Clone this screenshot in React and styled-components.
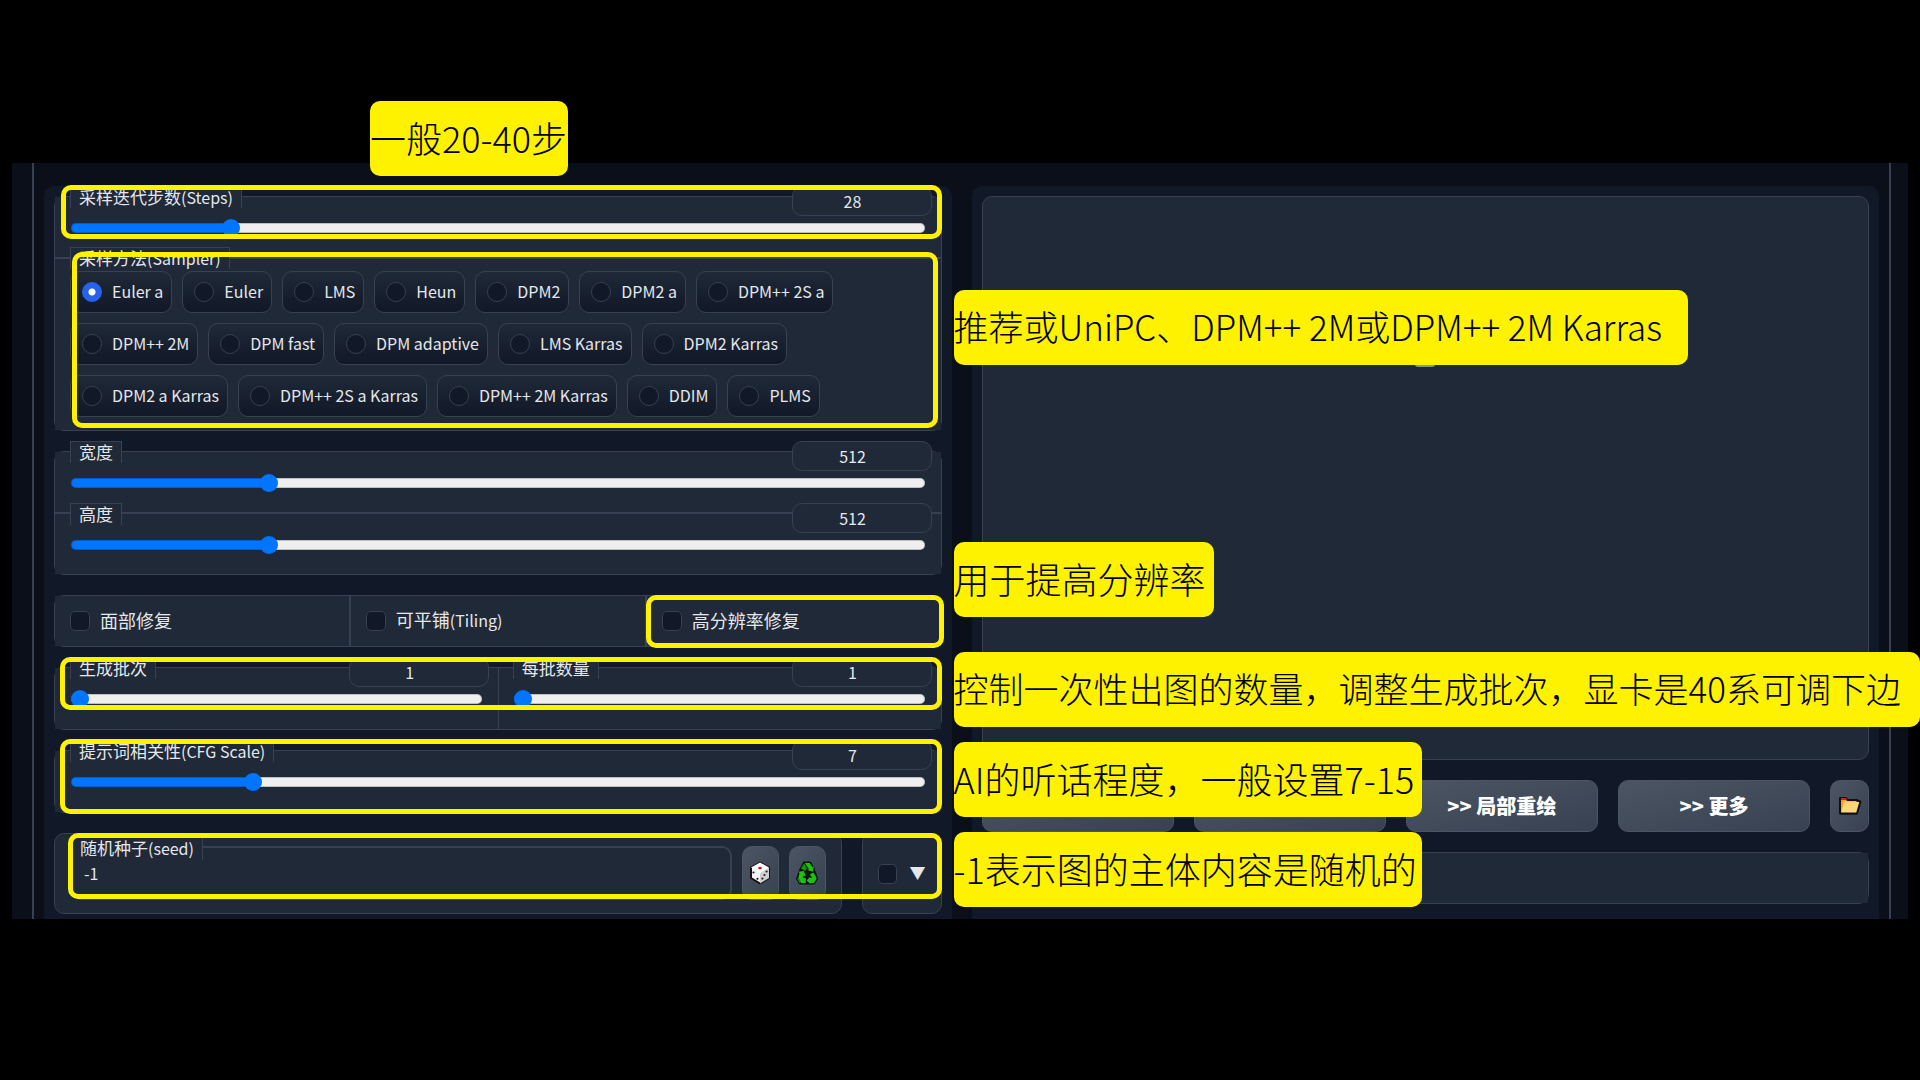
import React, { useState } from 'react'
import styled, { createGlobalStyle } from 'styled-components'

const samplers = [
    'Euler a', 'Euler', 'LMS', 'Heun', 'DPM2', 'DPM2 a', 'DPM++ 2S a',
    'DPM++ 2M', 'DPM fast', 'DPM adaptive', 'LMS Karras', 'DPM2 Karras',
    'DPM2 a Karras', 'DPM++ 2S a Karras', 'DPM++ 2M Karras', 'DDIM', 'PLMS',
]

function Slider({ id, label, latin, min, max, initial }) {
    const [value, setValue] = useState(initial)
    const ratio = (value - min) / (max - min)
    const onChange = (e) => setValue(Number(e.target.value))

    return (
        <Row>
            <RowHeader>
                <Label htmlFor={id}>{label}{latin && <Latin>{latin}</Latin>}</Label>
                <NumberBox aria-label={label} type="number" min={min} max={max} value={value} onChange={onChange} />
            </RowHeader>
            <Range
                id={id}
                type="range"
                min={min}
                max={max}
                value={value}
                onChange={onChange}
                style={{ '--ratio': ratio }}
            />
        </Row>
    )
}

function Check({ id, label, latin }) {
    return (
        <CheckCell htmlFor={id}>
            <Checkbox id={id} type="checkbox" />
            <CheckText>{label}{latin && <Latin>{latin}</Latin>}</CheckText>
        </CheckCell>
    )
}

function DiceIcon() {
    return (
        <svg width="22" height="24" viewBox="0 0 22 24" aria-hidden="true">
            <path d="M11 1.5 L20 6.5 V17 L11 22.5 L2 17 V6.5 Z" fill="#f2f2f2" stroke="#111" strokeWidth="2" strokeLinejoin="round" />
            <path d="M11 12 L20 6.5 V17 L11 22.5 Z" fill="#cfcfcf" />
            <path d="M11 1.5 L20 6.5 L11 12 L2 6.5 Z" fill="#fff" />
            <ellipse cx="11" cy="7" rx="1.8" ry="1.2" fill="#d5121e" />
            <g fill="#222">
                <circle cx="4.5" cy="11.5" r="1.1" />
                <circle cx="8.5" cy="17.8" r="1.1" />
                <circle cx="17.6" cy="10.5" r="1.1" />
                <circle cx="15.5" cy="14" r="1.1" />
                <circle cx="13.4" cy="17.6" r="1.1" />
            </g>
        </svg>
    )
}

function RecycleIcon() {
    return (
        <svg width="22" height="24" viewBox="0 0 22 24" aria-hidden="true">
            <path d="M7.5 1 H14.5 L18 7 L21.5 17.5 L18.5 23 H3.5 L0.5 18 L4 8 Z" fill="#111" stroke="#111" strokeLinejoin="round" />
            <g fill="#16c60c">
                <path d="M8.8 2 H13.8 L16.2 6 L17.8 5.4 L16.6 10.8 L11.4 9 L13 8.2 Z" />
                <path d="M17.5 11.4 L20.8 17.5 L18 22 H14.4 V23 L10.6 19.4 L14.4 15.6 V17 H16 L14 13.2 Z" />
                <path d="M2.4 10.8 L7.8 10 L9.8 15.2 L7.8 14.6 L6.6 17 H9.8 V22 H5 L2.4 16.2 L3.6 12.2 Z" />
            </g>
            <g fill="#0d9a07">
                <path d="M8 2.4 L11 7 L9.2 10 L5 7.6 Z" />
                <path d="M2.2 16 L4.6 22 H3.6 L1.4 18 Z" />
            </g>
        </svg>
    )
}

function FolderIcon() {
    return (
        <svg width="24" height="20" viewBox="0 0 24 20" aria-hidden="true">
            <path d="M2 2 H8 L9.5 4 H19 V17.5 H2 Z" fill="#f9a11b" stroke="#111" strokeWidth="2" strokeLinejoin="round" />
            <path d="M3 2 H8 L9 4 H3 Z" fill="#e81224" />
            <path d="M6 5.5 H22.5 L19 17.5 H3 Z" fill="#ffd67a" />
            <path d="M19 4.5 L22.5 5.5 L19 17.5 H2" fill="none" stroke="#111" strokeWidth="2" strokeLinejoin="round" />
        </svg>
    )
}

function App() {
    const [sampler, setSampler] = useState('Euler a')
    const [seed, setSeed] = useState('-1')

    return (
        <Screen>
            <GlobalStyle />
            <Panel>
                <Frame>
                    <Column>
                        <Group>
                            <Slider id="steps" label="采样迭代步数" latin="(Steps)" min={1} max={150} initial={28} />
                            <SamplerRow>
                                <Label as="legend">采样方法<Latin>(Sampler)</Latin></Label>
                                <Pills>
                                    {samplers.map((name) => (
                                        <Pill key={name}>
                                            <Radio
                                                type="radio"
                                                name="sampler"
                                                checked={sampler === name}
                                                onChange={() => setSampler(name)}
                                            />
                                            <PillText>{name}</PillText>
                                        </Pill>
                                    ))}
                                </Pills>
                            </SamplerRow>
                            <Highlight $top={-12} $height={54} $left={6} />
                            <Highlight $top={55} $height={176} $left={17} $right={3} />
                            <Note $top={-96} $left="315px" $width={198}>一般20-40步</Note>
                            <Note $top={93} $width={734} $long>推荐或UniPC、DPM++ 2M或DPM++ 2M Karras</Note>
                        </Group>

                        <Group>
                            <Slider id="width" label="宽度" min={64} max={2048} initial={512} />
                            <Slider id="height" label="高度" min={64} max={2048} initial={512} />
                        </Group>

                        <Group>
                            <CheckRow>
                                <Check id="faces" label="面部修复" />
                                <Check id="tiling" label="可平铺" latin="(Tiling)" />
                                <CheckHolder>
                                    <Check id="hires" label="高分辨率修复" />
                                    <Highlight $top={-1} $height={53} $left={-1} $right={-3} />
                                </CheckHolder>
                            </CheckRow>
                            <Note $top={-54} $width={260}>用于提高分辨率</Note>
                        </Group>

                        <Group>
                            <Pair>
                                <Slider id="count" label="生成批次" min={1} max={100} initial={1} />
                                <Slider id="size" label="每批数量" min={1} max={8} initial={1} />
                            </Pair>
                            <Highlight $top={-11} $height={53} $left={5} />
                            <Note $top={-16} $width={966} $long>控制一次性出图的数量，调整生成批次，显卡是40系可调下边</Note>
                        </Group>

                        <Group>
                            <Slider id="cfg" label="提示词相关性" latin="(CFG Scale)" min={1} max={30} initial={7} />
                            <Highlight $top={-12} $height={75} $left={5} />
                            <Note $top={-9} $width={468}>AI的听话程度，一般设置7-15</Note>
                        </Group>

                        <SeedRow>
                            <SeedBox>
                                <SeedField>
                                    <SeedLabel htmlFor="seed">随机种子<Latin>(seed)</Latin></SeedLabel>
                                    <SeedInput id="seed" type="text" value={seed} onChange={(e) => setSeed(e.target.value)} />
                                </SeedField>
                                <ToolButton aria-label="随机"><DiceIcon /></ToolButton>
                                <ToolButton aria-label="重用"><RecycleIcon /></ToolButton>
                            </SeedBox>
                            <ExtraBox htmlFor="extra">
                                <Checkbox id="extra" type="checkbox" />
                                <CheckText>▼</CheckText>
                            </ExtraBox>
                            <Highlight $top={0} $height={66} $left={14} $right={0} />
                            <Note $top={-1} $left="calc(100% + 12px)" $width={468}>-1表示图的主体内容是随机的</Note>
                        </SeedRow>
                    </Column>

                    <Column>
                        <Gallery>
                            <GalleryIcon width="26" height="24" viewBox="0 0 26 24" fill="none" stroke="#8b929c" strokeWidth="2" aria-hidden="true">
                                <rect x="4" y="3" width="18" height="19" rx="2" />
                                <circle cx="10" cy="9" r="2" />
                                <path d="M22 14 L17 9 L8 20" />
                            </GalleryIcon>
                        </Gallery>
                        <Actions>
                            <ActionButton aria-label="保存" />
                            <ActionButton aria-label="打包" />
                            <ActionButton>&gt;&gt; 局部重绘</ActionButton>
                            <ActionButton>&gt;&gt; 更多</ActionButton>
                            <FolderButton aria-label="打开文件夹"><FolderIcon /></FolderButton>
                        </Actions>
                        <Group>
                            <InfoRow />
                        </Group>
                    </Column>
                </Frame>
            </Panel>
        </Screen>
    )
}

export default App


const GlobalStyle = createGlobalStyle`
    body {
        margin: 0;
        background: #000;
        overflow-x: hidden;
    }
    *, *::before, *::after {
        box-sizing: border-box;
    }
    body, input, button {
        font-family: "Noto Sans CJK SC", sans-serif;
    }
`

const Screen = styled.main`
    padding: 163px 12px;
    color: #e5e7eb;
`

const Panel = styled.div`
    padding: 0 17px 0 20px;
    background: #0b0f19;
`

const Frame = styled.div`
    display: grid;
    grid-template-columns: minmax(0, 1fr) minmax(0, 1fr);
    gap: 20px;
    padding: 23px 10px 0;
    border: solid #374151;
    border-width: 0 2px;
`

const Column = styled.section`
    display: flex;
    flex-direction: column;
    gap: 20px;
    padding: 10px 10px 5px;
    border-radius: 10px 10px 0 0;
    background: #111827;
`

const Group = styled.div`
    position: relative;
    border: 1px solid #374151;
    border-radius: 10px;
`

const Row = styled.div`
    display: flex;
    flex-direction: column;
    padding-bottom: 20px;
    background: #1f2937;

    & + & {
        padding: 1px 0 19px;
        box-shadow: 0 -1px #374151, inset 0 1px #374151;
    }
`

const RowHeader = styled.div`
    display: flex;
    justify-content: space-between;
    align-items: flex-start;
    margin-top: -11px;
    padding: 0 9px 0 15px;
`

const Label = styled.label`
    height: 22px;
    padding: 0 8px;
    border: 1px solid #374151;
    border-bottom: 0;
    background: #1f2937;
    font-size: 17px;
    line-height: 19px;
    white-space: nowrap;
`

const Latin = styled.span`
    font-size: 16px;
`

const NumberBox = styled.input`
    width: 140px;
    height: 30px;
    padding: 0 18px 1px 0;
    border: 1px solid #374151;
    border-radius: 10px;
    background: #1f2937;
    color: #e5e7eb;
    font-size: 16px;
    text-align: center;
    appearance: textfield;

    &::-webkit-inner-spin-button {
        display: none;
    }
`

const Range = styled.input`
    width: calc(100% - 32px);
    height: 20px;
    margin: 2px 16px 0;
    appearance: none;
    background: none;

    &::-webkit-slider-runnable-track {
        height: 10px;
        border-radius: 5px;
        background: linear-gradient(#0075ff, #0075ff) 0 / calc(9px + (100% - 18px) * var(--ratio)) 100% no-repeat, #efefef;
        box-shadow: inset 0 0 0 1px rgba(0, 0, 0, 0.2);
    }

    &::-webkit-slider-thumb {
        width: 18px;
        height: 18px;
        margin-top: -4px;
        border-radius: 50%;
        background: #0075ff;
        appearance: none;
    }
`

const SamplerRow = styled.fieldset`
    min-width: 0;
    margin: 0;
    padding: 0 15px 13px;
    border: 0;
    background: #1f2937;
    box-shadow: 0 -1px #374151, inset 0 1px #374151;

    & > legend {
        float: left;
        margin-top: -11px;
    }
`

const Pills = styled.div`
    clear: both;
    display: flex;
    flex-wrap: wrap;
    gap: 10px;
    padding-top: 2px;
`

const Pill = styled.label`
    display: flex;
    align-items: center;
    gap: 10px;
    height: 42px;
    padding: 0 8px 0 11px;
    border: 1px solid #374151;
    border-radius: 10px;
    background: linear-gradient(to bottom, #1f2937, #111827);
    font-size: 16px;
    white-space: nowrap;
`

const PillText = styled.span`
    padding-bottom: 2px;
`

const Radio = styled.input`
    width: 20px;
    height: 20px;
    margin: 0;
    border: 1px solid #374151;
    border-radius: 50%;
    background: #111827;
    appearance: none;

    &:checked {
        border-color: #2563eb;
        background: radial-gradient(circle, #fff 3px, #2563eb 4px);
    }
`

const Checkbox = styled.input`
    width: 20px;
    height: 20px;
    margin: 0;
    border: 1px solid #374151;
    border-radius: 5px;
    background: #111827;
    appearance: none;
`

const CheckRow = styled.div`
    display: grid;
    grid-template-columns: repeat(3, 1fr);
    gap: 2px;
    background: #374151;
`

const CheckHolder = styled.div`
    position: relative;
`

const CheckCell = styled.label`
    display: flex;
    align-items: center;
    gap: 10px;
    height: 50px;
    padding: 0 15px;
    background: #1f2937;
`

const CheckText = styled.span`
    padding-bottom: 3px;
    font-size: 18px;
    line-height: 24px;
`

const Pair = styled.div`
    display: grid;
    grid-template-columns: 1fr 1fr;

    & > ${Row} + ${Row} {
        padding: 0 0 20px;
        box-shadow: inset 1px 0 #374151;
    }
`

const SeedRow = styled.div`
    position: relative;
    display: flex;
    gap: 20px;
`

const SeedBox = styled.div`
    flex: 1;
    display: flex;
    gap: 10px;
    padding: 12px 15px 13px;
    border: 1px solid #374151;
    border-radius: 10px;
    background: #1f2937;
`

const SeedField = styled.div`
    flex: 1;
    border: 2px solid #374151;
    border-radius: 10px;
`

const SeedLabel = styled(Label)`
    display: block;
    width: fit-content;
    margin-top: -10px;
    border-width: 0 1px 0 0;
`

const SeedInput = styled.input`
    display: block;
    width: 100%;
    height: 26px;
    padding: 0 12px;
    border: 0;
    background: none;
    color: #e5e7eb;
    font-size: 16px;
`

const Button = styled.button`
    display: flex;
    align-items: center;
    justify-content: center;
    padding: 0;
    border: 1px solid #4b5563;
    border-radius: 10px;
    background: linear-gradient(to bottom right, #4b5563, #374151);
    color: #fff;
`

const ToolButton = styled(Button)`
    width: 37px;
    height: 54px;
`

const ExtraBox = styled.label`
    display: flex;
    align-items: center;
    gap: 12px;
    width: 80px;
    padding: 0 15px;
    border: 1px solid #374151;
    border-radius: 10px;
    background: #1f2937;

    & > ${CheckText} {
        font-size: 16px;
    }
`

const Gallery = styled.div`
    height: 564px;
    padding-top: 147px;
    border: 1px solid #374151;
    border-radius: 10px;
    background: #1f2937;
`

const GalleryIcon = styled.svg`
    display: block;
    margin: 0 auto;
`

const Actions = styled.div`
    display: flex;
    gap: 20px;
`

const ActionButton = styled(Button)`
    flex: 1;
    height: 52px;
    padding-bottom: 2px;
    font-size: 20px;
    font-weight: 900;
`

const FolderButton = styled(Button)`
    width: 39px;
    height: 52px;
`

const InfoRow = styled.div`
    height: 50px;
    background: #1f2937;
`

/* marker drawn over the controls it points at */
const Highlight = styled.div`
    position: absolute;
    z-index: 1;
    top: ${(p) => p.$top}px;
    left: ${(p) => p.$left}px;
    right: ${(p) => p.$right ?? -1}px;
    height: ${(p) => p.$height}px;
    border: 5px solid #fff200;
    border-radius: 10px;
    pointer-events: none;
`

const Note = styled.p`
    position: absolute;
    z-index: 2;
    top: ${(p) => p.$top}px;
    left: ${(p) => p.$left || 'calc(100% + 13px)'};
    width: ${(p) => p.$width}px;
    height: 75px;
    margin: 0;
    border-radius: 10px;
    background: #fff200;
    color: #000;
    font-size: ${(p) => (p.$long ? 35 : 36)}px;
    font-weight: 200;
    line-height: 72px;
    white-space: nowrap;
`
